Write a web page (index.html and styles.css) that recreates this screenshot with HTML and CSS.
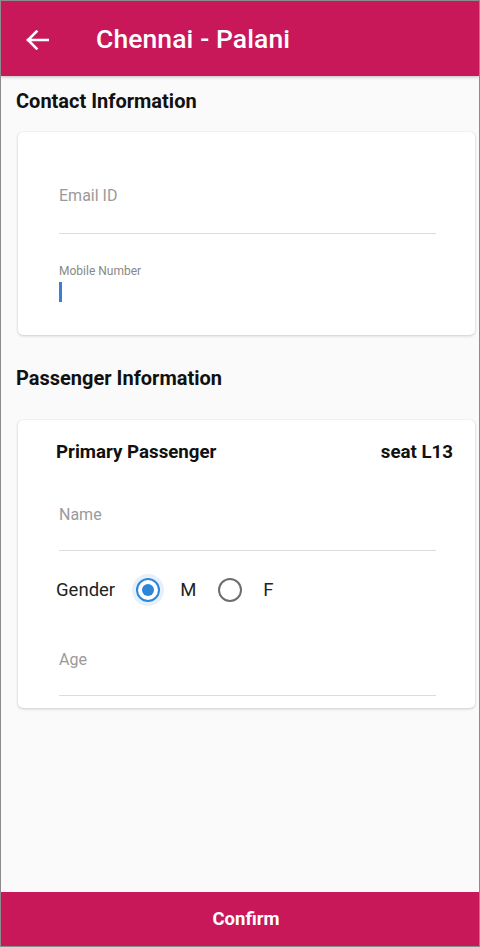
FILE: index.html
```html
<!DOCTYPE html>
<html>
<head>
<meta charset="utf-8">
<link rel="stylesheet" href="styles.css">
</head>
<body>
<div class="screen">
  <header class="appbar">
    <svg class="back" width="24" height="20" viewBox="0 0 24 20"><path d="M23 10H3M11.5 1.5L3 10l8.5 8.5" fill="none" stroke="#fff" stroke-width="2.6" stroke-linecap="square"/></svg>
    <h1 class="title">Chennai - Palani</h1>
  </header>
  <main class="content">
    <h2 class="section">Contact Information</h2>
    <div class="card contact">
      <div class="field">
        <div class="placeholder">Email ID</div>
      </div>
      <div class="field focused">
        <div class="label">Mobile Number</div>
        <div class="cursor"></div>
      </div>
    </div>
    <h2 class="section">Passenger Information</h2>
    <div class="card passenger">
      <div class="pass-head">
        <span>Primary Passenger</span>
        <span>seat L13</span>
      </div>
      <div class="field name">
        <div class="placeholder">Name</div>
      </div>
      <div class="gender">
        <span class="glabel">Gender</span>
        <span class="radio checked"><span class="dot"></span></span>
        <span class="opt">M</span>
        <span class="radio"></span>
        <span class="opt">F</span>
      </div>
      <div class="field age">
        <div class="placeholder">Age</div>
      </div>
    </div>
  </main>
  <footer class="confirm">Confirm</footer>
</div>
</body>
</html>
```

FILE: styles.css
```css
* { box-sizing: border-box; }
html, body { margin: 0; padding: 0; }
body { font-family: Roboto, "Noto Sans", sans-serif; background: #fff; }
.screen {
  width: 480px; height: 947px;
  border: 1px solid #8c8c8c;
  display: flex; flex-direction: column;
  background: #fafafa;
  overflow: hidden;
}
.appbar {
  height: 75px; flex: none;
  background: #c8185a;
  display: flex; align-items: center;
  padding-left: 24px;
  box-shadow: 0 1px 3px rgba(0,0,0,0.25);
}
.back { width: 24px; height: 20px; margin-top: 2px; flex: none; }
.title {
  margin: 0 0 0 47px;
  color: #fff; font-weight: 500; font-size: 26.5px;
  letter-spacing: 0.1px;
}
.content { flex: 1; padding: 0 4px 0 15px; }
.section {
  margin: 13px 0 0 0;
  font-size: 20px; font-weight: 700; color: #111;
  height: 24px; line-height: 24px;
}
.card {
  background: #fff;
  border-radius: 5px;
  margin: 0 0 0 2px;
  box-shadow: 0 1px 3px rgba(0,0,0,0.18), 0 0 1px rgba(0,0,0,0.12);
}
.contact { margin-top: 19px; height: 203px; padding: 54px 39px 0 41px; margin-bottom: 31px; }
.field { border-bottom: 1px solid #dcdcdc; position: relative; }
.placeholder { font-size: 16px; color: #9a9a9a; line-height: 20px; padding-bottom: 27px; }
.field.focused { border-bottom: none; margin-top: 29px; }
.label { font-size: 12px; color: #888; line-height: 16px; }
.cursor { width: 2.5px; height: 20px; background: #3a7fd0; margin-top: 3px; }
.passenger { margin-top: 30px; height: 288px; padding: 20px 22px 0 38px; }
.pass-head {
  display: flex; justify-content: space-between;
  font-size: 18.7px; font-weight: 700; color: #111; line-height: 24px;
}
.passenger .field { margin: 41px 17px 0 3px; }
.passenger .field .placeholder { padding-bottom: 25px; }
.gender { display: flex; align-items: center; margin-top: 27px; height: 24px; font-size: 18.5px; color: #222; }
.glabel { margin-right: 21px; }
.radio {
  width: 24px; height: 24px; border-radius: 50%; flex: none;
  border: 2.5px solid #6e6e6e;
  display: flex; align-items: center; justify-content: center;
}
.radio.checked { border-color: #2d86d8; box-shadow: 0 0 0 4px rgba(45,134,216,0.12); }
.dot { width: 12px; height: 12px; border-radius: 50%; background: #2d86d8; }
.opt { margin: 0 22px 0 20px; }
.gender .opt:last-child { margin-left: 21px; }
.passenger .field.age { margin-top: 48px; }
.confirm {
  height: 54px; flex: none;
  background: #c8185a; color: #fff;
  font-size: 18.5px; font-weight: 700;
  padding-left: 12px;
  display: flex; align-items: center; justify-content: center;
}
```
